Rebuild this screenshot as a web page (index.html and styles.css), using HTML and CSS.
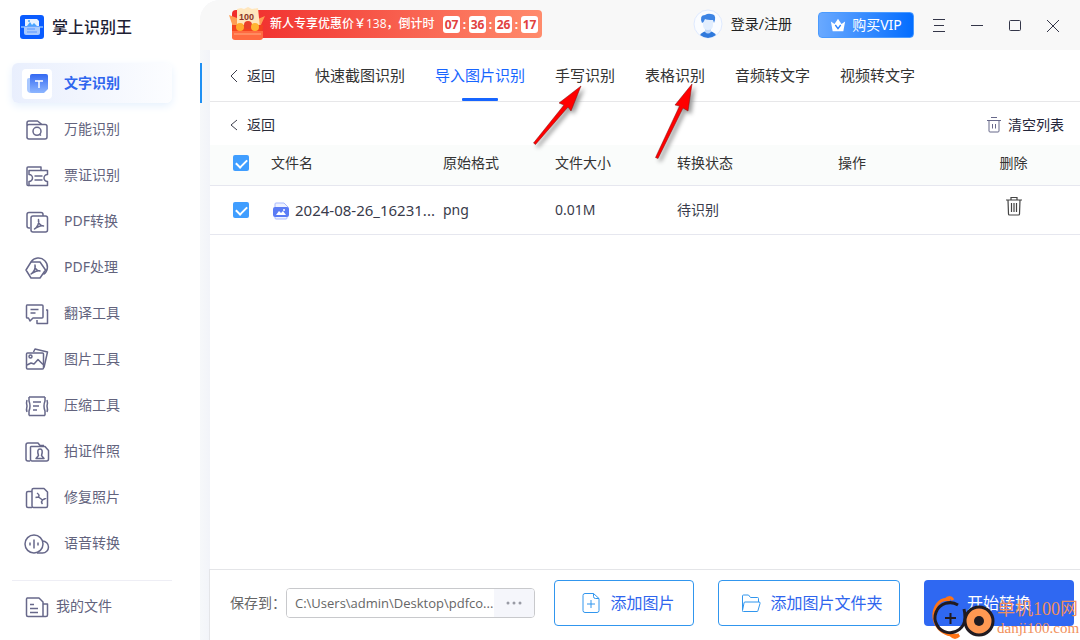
FILE: index.html
```html
<!DOCTYPE html>
<html lang="zh-CN">
<head>
<meta charset="utf-8">
<title>掌上识别王</title>
<link rel="stylesheet" href="styles.css">
</head>
<body>
<div class="app">
  <aside class="sidebar">
    <div class="brand">
      <svg class="brand-logo" viewBox="0 0 24 24"><rect width="24" height="24" rx="3" fill="#0a5cff"/><path d="M5 4h12l2 2v6H5z" fill="#e9f2ff"/><path d="M7 11l3-4 2 3 2-2 3 3z" fill="#4aa5ff"/><circle cx="9" cy="6" r="1" fill="#4aa5ff"/><path d="M1 11h22v2H1z" fill="#69a5ff"/><path d="M4 12h16v6a2 2 0 0 1-2 2H6a2 2 0 0 1-2-2z" fill="#a8caff"/><path d="M7 14h8M7 17h10" stroke="#5b95ff"/></svg>
      <h1 class="brand-name">掌上识别王</h1>
    </div>
    <nav class="menu">
      <a class="menu-item active" href="#"><span class="menu-icon"><svg viewBox="0 0 30 30"><defs><linearGradient id="t" x2="0" y2="1"><stop stop-color="#3469f2"/><stop offset="1" stop-color="#8db6ff"/></linearGradient></defs><path d="M7 9h12v15H9a4 4 0 0 1-4-4v-9a2 2 0 0 1 2-2z" fill="#a9c8ff"/><path d="M10 5h14a2 2 0 0 1 2 2v13l-4 4H10a2 2 0 0 1-2-2V7a2 2 0 0 1 2-2z" fill="url(#t)"/><path d="M13 12h8M17 12v7" stroke="#fff" stroke-width="1.5"/></svg></span>文字识别</a>
      <a class="menu-item" href="#"><svg class="menu-icon" viewBox="0 0 30 30"><path d="M5 24V9a2 2 0 0 1 2-2h8.500l4.500 3.500M5 12q0-1.500 2-1.500h16a2 2 0 0 1 2 2v10.500a2 2 0 0 1-2 2H7a2 2 0 0 1-2-2z"/><circle cx="15" cy="17.300" r="4"/><path d="M17 20l2 1.500"/></svg>万能识别</a>
      <a class="menu-item" href="#"><svg class="menu-icon" viewBox="0 0 30 30"><path d="M7 25.500H6a1 1 0 0 1-1-1V8a1 1 0 0 1 1-1h13v3.500"/><path d="M7 10.500h18.500v4a3.500 3.500 0 0 0 0 7v4H7v-4a3.500 3.500 0 0 0 0-7z"/><path d="M12.500 16h8M12.500 20h8"/></svg>票证识别</a>
      <a class="menu-item" href="#"><svg class="menu-icon" viewBox="0 0 30 30"><path d="M8 22H7a2 2 0 0 1-2-2V8.500a2 2 0 0 1 2-2h12a2 2 0 0 1 2 2V10"/><rect x="9" y="10" width="16.500" height="16" rx="2"/><path d="M16.500 13.500c-1 4 3 6.500 5 6.500-3-1-8 2-9 3 3-2 5-6 4-9.500z"/></svg>PDF转换</a>
      <a class="menu-item" href="#"><svg class="menu-icon" viewBox="0 0 30 30"><path d="M9 10a9 9 0 1 1 12.500 12.500"/><path d="M9 10h9l5.500 8-5.500 8H9l-5-8z"/><path d="M13 13c-1 4 3 6 5 6-3-1-7 2-9 3 3-2 5-6 4-9z"/></svg>PDF处理</a>
      <a class="menu-item" href="#"><svg class="menu-icon" viewBox="0 0 30 30"><path d="M5 7h15a1 1 0 0 1 1 1v11a1 1 0 0 1-1 1h-9l-3 3-1.500-3H5a1 1 0 0 1-.500-1V8q0-1 .500-1z"/><path d="M8.500 11.500h8M8.500 15h5M24 12h1.500v13.500H15V22"/></svg>翻译工具</a>
      <a class="menu-item" href="#"><svg class="menu-icon" viewBox="0 0 30 30"><rect x="4.500" y="9" width="17" height="16" rx="1"/><path d="M11.500 8l1.500-3 12.500 3-3.500 15.500M5 21l4-2 3 1 4-4.500 5 5"/><circle cx="8.500" cy="12.500" r="1.500"/></svg>图片工具</a>
      <a class="menu-item" href="#"><svg class="menu-icon" viewBox="0 0 30 30"><path d="M7 7h16M7 25.500h16M7 7v4q2 5 0 10v4.500M23 7v4q-2 5 0 10v4.500M5 10q-1 3 0 6-1 4 0 6M25 10q1 3 0 6 1 4 0 6M11 12h8M11 16h6M11 20h4"/></svg>压缩工具</a>
      <a class="menu-item" href="#"><svg class="menu-icon" viewBox="0 0 30 30"><path d="M8 25H6a2 2 0 0 1-2-2V9a2 2 0 0 1 2-2h10l2 2.500h4"/><path d="M9 10.500h14l3.500 4V23a2 2 0 0 1-2 2H10q-1.500 0-1.500-1.500V11z"/><path d="M14 22.500h8l-2.500-3q2-6.500-1.500-6.500T16.500 19.500z"/></svg>拍证件照</a>
      <a class="menu-item" href="#"><svg class="menu-icon" viewBox="0 0 30 30"><path d="M10 9.500H6q-1.500 0-1.500 1.500v13q0 1.500 1.500 1.500h4"/><path d="M10 8q0-1.500 1.500-1.500H22l3.500 3.500v14q0 1.500-1.500 1.500H11.500Q10 25.500 10 24z"/><path d="M15 11q3 2 1.500 4l-3 .500m3-.500l4 3q3-2 3.500-1m-3.500 1q-2 2 0 4"/></svg>修复照片</a>
      <a class="menu-item" href="#"><svg class="menu-icon" viewBox="0 0 30 30"><circle cx="12" cy="16" r="9"/><path d="M20.500 13a6 6 0 0 1 0 12H15M8 14.500v3M12 11.500v9M16 14.500v3"/></svg>语音转换</a>
    </nav>
    <div class="files">
      <a class="menu-item files-link" href="#"><svg class="menu-icon" viewBox="0 0 30 30"><path d="M5 7h12l4 4v14.500H6q-1.500 0-1.500-1.500V8zM21 13h4.500v11q0 1.500-1.500 1.500h-3M8 13.500h4M8 17.500h8M8 21.500h8"/></svg>我的文件</a>
    </div>
  </aside>

  <main class="main">
    <header class="topbar">
      <div class="promo">
        <svg class="promo-gift" viewBox="0 0 36 34"><path d="M0 8l8 3v10L4 20zM36 9l-7 3 2 8z" fill="#ff9d52"/><path d="M8 2l4-1 3 1 4-2 4 2 6-1 2 20H8z" fill="#ffe6bd"/><path d="M3 18h31l-1 11q0 3-3 3H6q-3 0-3-3z" fill="#f4431f"/><circle cx="11" cy="20" r="4" fill="#ffab2e"/><circle cx="19" cy="18" r="4" fill="#e9402b"/><circle cx="26" cy="20" r="4" fill="#ffb532"/><path d="M3 24h31v6q0 3-3 3H6q-3 0-3-3z" fill="#ff6b41"/><path d="M5 27h27" stroke="#ffad82"/><text x="10" y="13" class="gift-text">100</text></svg>
        <span class="promo-text">新人专享优惠价￥138，倒计时</span>
        <span class="timer"><b>07</b><i>:</i><b>36</b><i>:</i><b>26</b><i>:</i><b>17</b></span>
      </div>
      <a class="account" href="#">
        <svg class="avatar" viewBox="0 0 30 30"><circle cx="15" cy="15" r="14" fill="#fafcff" stroke="#dfeaff"/><path d="M7 26q3-4 8-4t8 4q-4 3-8 3t-8-3z" fill="#2f79dc"/><path d="M12 19h6v4q-3 3-6 0z" fill="#bcd6fa"/><path d="M10 10h10v6q0 5-5 5t-5-5z" fill="#e2eefe"/><path d="M9 14q-3-8 3-8 3-2 6-1 5 0 4 6l-1 3-1-3q-6 0-8-1-1 3-3 4z" fill="#3d84e4"/></svg>
        登录/注册</a>
      <button class="vip" type="button"><svg viewBox="0 0 18 16" class="crown"><path d="M1 4l4 3 2-3 2-3 2 3 2 3 4-3-2 11H3z" fill="#fff"/><path d="M6 8l3 4 3-4" fill="none" stroke="#2a82ff" stroke-width="1.500"/></svg>购买VIP</button>
      <div class="window-buttons">
        <button type="button" aria-label="菜单"><svg viewBox="0 0 14 14"><path d="M1 1.500h12M2 7.500h10M1 13.500h12"/></svg></button>
        <button type="button" aria-label="最小化"><svg viewBox="0 0 14 14"><path d="M1 7.500h12"/></svg></button>
        <button type="button" aria-label="最大化"><svg viewBox="0 0 14 14"><rect x="1.500" y="2.500" width="11" height="10" rx="1"/></svg></button>
        <button type="button" aria-label="关闭"><svg viewBox="0 0 14 14"><path d="M1 2l12 12M13 2L1 14"/></svg></button>
      </div>
    </header>

    <section class="workspace">
      <nav class="tabs">
        <a class="back" href="#"><svg viewBox="0 0 8 14"><path d="M7 1L1 7l6 6"/></svg>返回</a>
        <a class="tab" href="#">快速截图识别</a>
        <a class="tab current" href="#">导入图片识别</a>
        <a class="tab" href="#">手写识别</a>
        <a class="tab" href="#">表格识别</a>
        <a class="tab" href="#">音频转文字</a>
        <a class="tab" href="#">视频转文字</a>
      </nav>
      <div class="tools">
        <a class="back" href="#"><svg viewBox="0 0 8 14"><path d="M7 2L1 7l6 5"/></svg>返回</a>
        <button class="clear" type="button"><svg viewBox="0 0 16 16"><path d="M1 3.500h14M5 .500h6M3 4v10q0 1 1 1h8q1 0 1-1V4M6.500 7v4.500M9.500 7v4.500"/></svg>清空列表</button>
      </div>
      <table class="list">
        <colgroup><col class="c-check"><col><col class="c-format"><col class="c-size"><col class="c-state"><col class="c-action"><col class="c-delete"></colgroup>
        <thead><tr><th><input class="check" type="checkbox" aria-label="全选" checked></th><th>文件名</th><th>原始格式</th><th>文件大小</th><th>转换状态</th><th class="center">操作</th><th class="center">删除</th></tr></thead>
        <tbody><tr>
          <td><input class="check" type="checkbox" aria-label="选择文件" checked></td>
          <td><span class="file"><svg viewBox="0 0 18 18"><path d="M3 7V2q0-1 1-1h8l4 4v2M3 14v2q0 1 1 1h10q1 0 1-1v-2" fill="#eef2ff" stroke="#a9baff"/><rect x="1" y="5" width="16" height="10" rx="2" fill="#5b7cf5"/><path d="M4 13l3-4 2 2 2-2 3 4z" fill="#fff"/><circle cx="12" cy="8" r="1" fill="#fff"/></svg>2024-08-26_16231...</span></td>
          <td>png</td><td>0.01M</td><td>待识别</td><td></td>
          <td class="center"><button class="trash" type="button" aria-label="删除"><svg viewBox="0 0 18 20"><path d="M1 4h16M6 3.500V1.500h6v2M3 4l.500 14q0 1 1 1h9q1 0 1-1L15 4M6.500 7v9M9 7v9M11.500 7v9"/></svg></button></td>
        </tr></tbody>
      </table>
    </section>

    <footer class="bottom">
      <label class="save-label" for="path">保存到：</label>
      <div class="path"><input id="path" type="text" value="C:\Users\admin\Desktop\pdfco..." readonly><button type="button" aria-label="浏览"><svg viewBox="0 0 16 4"><circle cx="2" cy="2" r="1.500"/><circle cx="8" cy="2" r="1.500"/><circle cx="14" cy="2" r="1.500"/></svg></button></div>
      <button class="add add-image" type="button"><svg viewBox="0 0 20 22"><path d="M12.500 1.500H4q-2 0-2 2v15q0 2 2 2h12q2 0 2-2V6.500zM12.500 1.500v3q0 2 2 2H18M6 12h8M10 8v8"/></svg>添加图片</button>
      <button class="add add-folder" type="button"><svg viewBox="0 0 20 22"><path d="M1.500 18V4q0-1 1-1h5l2 2.500h7q1 0 1 1V10M4 10h14q1.500 0 1 1.500l-2 7q0 1-1 1H2.500q-1.500 0-1-1L3 11q0-1 1-1z"/></svg>添加图片文件夹</button>
      <button class="start" type="button">开始转换</button>
    </footer>
  </main>

  <svg class="arrow arrow-one" viewBox="0 0 60 70"><path d="M5.500 63.500L3.500 62 34 24l-5-2L51 5 41 30l-3-4z"/></svg>
  <svg class="arrow arrow-two" viewBox="0 0 50 84"><path d="M8 77.500L5.500 76.500 29.500 25l-4.500-1L42 3l-4 27-5-3z"/></svg>
  <div class="stamp">
    <svg class="stamp-logo" viewBox="0 0 66 44" fill="none"><path d="M19 4C8 1 2 12 3 22c2 11 11 19 25 17" stroke="#ff7316" stroke-width="3"/><path d="M14 4q5-5 8 0M20 39q4 5 8 0" stroke="#ff7316" stroke-width="3"/><path d="M27 9A15 15 0 1 0 34 22q0-5-1-9" stroke="#211b21" stroke-width="3"/><path d="M14 22h11M19.500 17v11" stroke="#211b21" stroke-width="2"/><circle cx="48" cy="25" r="14" fill="#ff9852" stroke="#211b21" stroke-width="3"/><circle cx="48" cy="25" r="5" fill="#211b21"/></svg>
    <div class="stamp-copy"><span class="stamp-name">单机100网</span><span class="stamp-site">danji100.com</span></div>
  </div>
</div>
</body>
</html>
```
FILE: styles.css
```css
* { box-sizing: border-box; }
body { margin: 0; font: 14px/20px "Noto Sans", "Noto Sans CJK SC", sans-serif; color: #333; background: #fff; }
a { color: inherit; text-decoration: none; }
button { font: inherit; color: inherit; padding: 0; border: 0; background: none; }
svg { flex: none; }
.app { position: relative; display: flex; min-height: 100vh; overflow: hidden; }

.sidebar { flex: none; width: 200px; display: flex; flex-direction: column; padding: 15px 28px 14px 12px; }
.brand { display: flex; align-items: center; gap: 8px; height: 24px; padding-left: 8px; }
.brand-logo { width: 24px; height: 24px; }
.brand-name { margin: 0; padding-bottom: 2px; font-size: 16px; font-weight: 500; font-family: "Noto Sans CJK SC", sans-serif; color: #1d2033; }
.menu { display: flex; flex-direction: column; gap: 6px; margin-top: 24px; }
.menu-item { position: relative; display: flex; align-items: center; gap: 12px; height: 40px; padding-left: 10px; color: #62637d; border-radius: 6px; }
.menu-icon { width: 30px; height: 30px; fill: none; stroke: #67688a; stroke-width: 1.5; stroke-linejoin: round; }
.menu-item.active { color: #2f66ee; font-weight: 700; background: linear-gradient(90deg, #e9effd, #fcfdff); box-shadow: 0 3px 8px #e6f1fd; }
.menu-item.active::after { content: ""; position: absolute; left: 188px; top: 0; width: 2px; height: 40px; background: #2090f3; }
.active .menu-icon { margin-top: 2px; background: #fff; border-radius: 4px; stroke: none; }
.active svg { display: block; width: 30px; height: 30px; }
.files { margin-top: auto; padding-top: 5px; border-top: 1px solid #eeeef5; }
.files-link { gap: 4px; }

.main { flex: 1; min-width: 0; display: flex; flex-direction: column; background: linear-gradient(90deg, #f6f8fa, #f2f4f9 10px); border-radius: 20px 0 0 0; }
.topbar { display: flex; align-items: center; height: 50px; padding: 0 8px 0 32px; background: #f8f8f8; border-radius: 20px 0 0 0; }
.promo { display: flex; align-items: center; height: 28px; margin-bottom: 2px; padding-right: 4px; border-radius: 4px; color: #fff; background: linear-gradient(90deg, #f02b2b, #ff8b6c); }
.promo-gift { width: 36px; height: 34px; margin-left: -3px; }
.gift-text { font: bold 9px "Liberation Sans", sans-serif; fill: #8a3426; }
.promo-text { width: 168px; margin-left: 5px; font-size: 12px; font-weight: 500; font-family: "Open Sans", "Noto Sans CJK SC", sans-serif; white-space: nowrap; }
.timer { display: flex; align-items: center; margin-left: 5px; font-size: 12px; line-height: 17px; }
.timer b { width: 17px; text-align: center; color: #e1423f; background: #fff; border-radius: 3px; }
.timer i { width: 9px; text-align: center; font-style: normal; font-weight: bold; }
.account { display: flex; align-items: center; gap: 8px; margin: 0 26px 2px auto; color: #222; }
.avatar { width: 30px; height: 30px; }
.vip { display: flex; align-items: center; justify-content: center; gap: 6px; width: 96px; height: 26px; margin-right: 6px; color: #fff; border: 1px solid #4a9bff; border-radius: 4px; background: linear-gradient(90deg, #69a9ff, #036dff); white-space: nowrap; }
.crown { width: 16px; height: 16px; }
.window-buttons { display: flex; }
.window-buttons button { display: grid; place-items: center; width: 38px; height: 30px; }
.window-buttons svg { width: 14px; height: 14px; fill: none; stroke: #343649; overflow: visible; }

.workspace { flex: 1; margin-left: 10px; background: #fff; }
.tabs { display: flex; align-items: center; gap: 30px; height: 52px; padding-left: 20px; border-bottom: 1px solid #e7e7e9; font-size: 15px; white-space: nowrap; }
.tab { position: relative; line-height: 51px; }
.tab.current { color: #1765ff; }
.tab.current::after { content: ""; position: absolute; left: 27px; bottom: 0; width: 36px; height: 3px; border-radius: 1px; background: #1765ff; }
.back { display: flex; align-items: center; gap: 9px; font-size: 14px; color: #2c2d3a; }
.back svg { width: 8px; height: 14px; fill: none; stroke: #3c3d4b; }
.tabs .back { margin-right: 10px; }
.tools { display: flex; align-items: center; justify-content: space-between; height: 43px; padding: 3px 16px 0 20px; }
.clear { display: flex; align-items: center; gap: 6px; color: #24263a; }
.clear svg { width: 16px; height: 16px; fill: none; stroke: #67688a; }
.list { width: 100%; table-layout: fixed; border-collapse: collapse; color: #393b4b; }
.c-check { width: 61px; }
.c-format { width: 112px; }
.c-size { width: 122px; }
.c-state { width: 80px; }
.c-action { width: 190px; }
.c-delete { width: 133px; }
.list th, .list td { padding: 0; text-align: left; font-weight: normal; border-bottom: 1px solid #e6e7ef; white-space: nowrap; }
.list th { height: 40px; padding-bottom: 4px; background: #fafcfb; color: #333; }
.list td { height: 49px; }
.list .center { text-align: center; }
.check { appearance: none; display: block; width: 16px; height: 16px; margin: 0 0 0 23px; border-radius: 2px; background: #409eff; }
.check:checked::after { content: ""; display: block; width: 9px; height: 5px; margin: 4px 0 0 3px; border: solid #fff; border-width: 0 0 2px 2px; transform: rotate(-45deg); }
.file { display: flex; align-items: center; gap: 5px; padding-left: 1px; font-size: 15px; }
.file svg { width: 18px; height: 18px; margin-top: 2px; }
.trash { padding-bottom: 8px; }
.trash svg { display: block; width: 18px; height: 20px; fill: none; stroke: #444; stroke-width: 1.2; }

.bottom { display: flex; align-items: center; height: 71px; margin-left: 9px; padding: 0 6px 4px 20px; border: solid #e4e5e8; border-width: 1px 0 0 1px; background: #fff; }
.save-label { width: 56px; color: #666; white-space: nowrap; }
.path { display: flex; flex: 1 1 249px; height: 30px; overflow: hidden; border: 1px solid #c8c9cc; border-radius: 4px; }
.path input { flex: 1; min-width: 0; padding: 0 0 0 8px; border: 0; outline: 0; font: 13px/20px "Open Sans", sans-serif; color: #666; }
.path button { display: grid; place-items: center; width: 40px; background: #f5f6fb; }
.path svg { width: 16px; height: 4px; fill: #999ba5; }
.add { display: flex; align-items: center; justify-content: center; gap: 9px; height: 46px; border: 1px solid #3196ee; border-radius: 4px; color: #2f66ee; background: #fff; font-size: 16px; white-space: nowrap; }
.add svg { width: 20px; height: 22px; fill: none; stroke: #3196ee; }
.add-image { width: 140px; margin-left: 19px; padding-left: 8px; }
.add-folder { width: 182px; margin-left: 24px; padding-left: 6px; }
.start { width: 150px; height: 46px; margin-left: 24px; border-radius: 4px; background: #2f68f2; color: #fff; font-size: 16px; }

.arrow { position: absolute; fill: #f00; stroke: #801010; stroke-width: .5; filter: drop-shadow(3px 3px 2px #999); pointer-events: none; }
.arrow-one { left: 530px; top: 81px; width: 60px; height: 70px; }
.arrow-two { left: 650px; top: 81px; width: 50px; height: 84px; }
.stamp { position: absolute; right: 3px; bottom: 0; display: flex; align-items: center; pointer-events: none; }
.stamp-logo { width: 66px; height: 44px; }
.stamp-copy { display: flex; flex-direction: column; width: 80px; padding-bottom: 2px; color: #f1905b; white-space: nowrap; }
.stamp-name { font: 18px/22px "Liberation Serif", "Noto Sans CJK SC", serif; }
.stamp-site { font: 15px/16px "Liberation Serif", serif; }
```
